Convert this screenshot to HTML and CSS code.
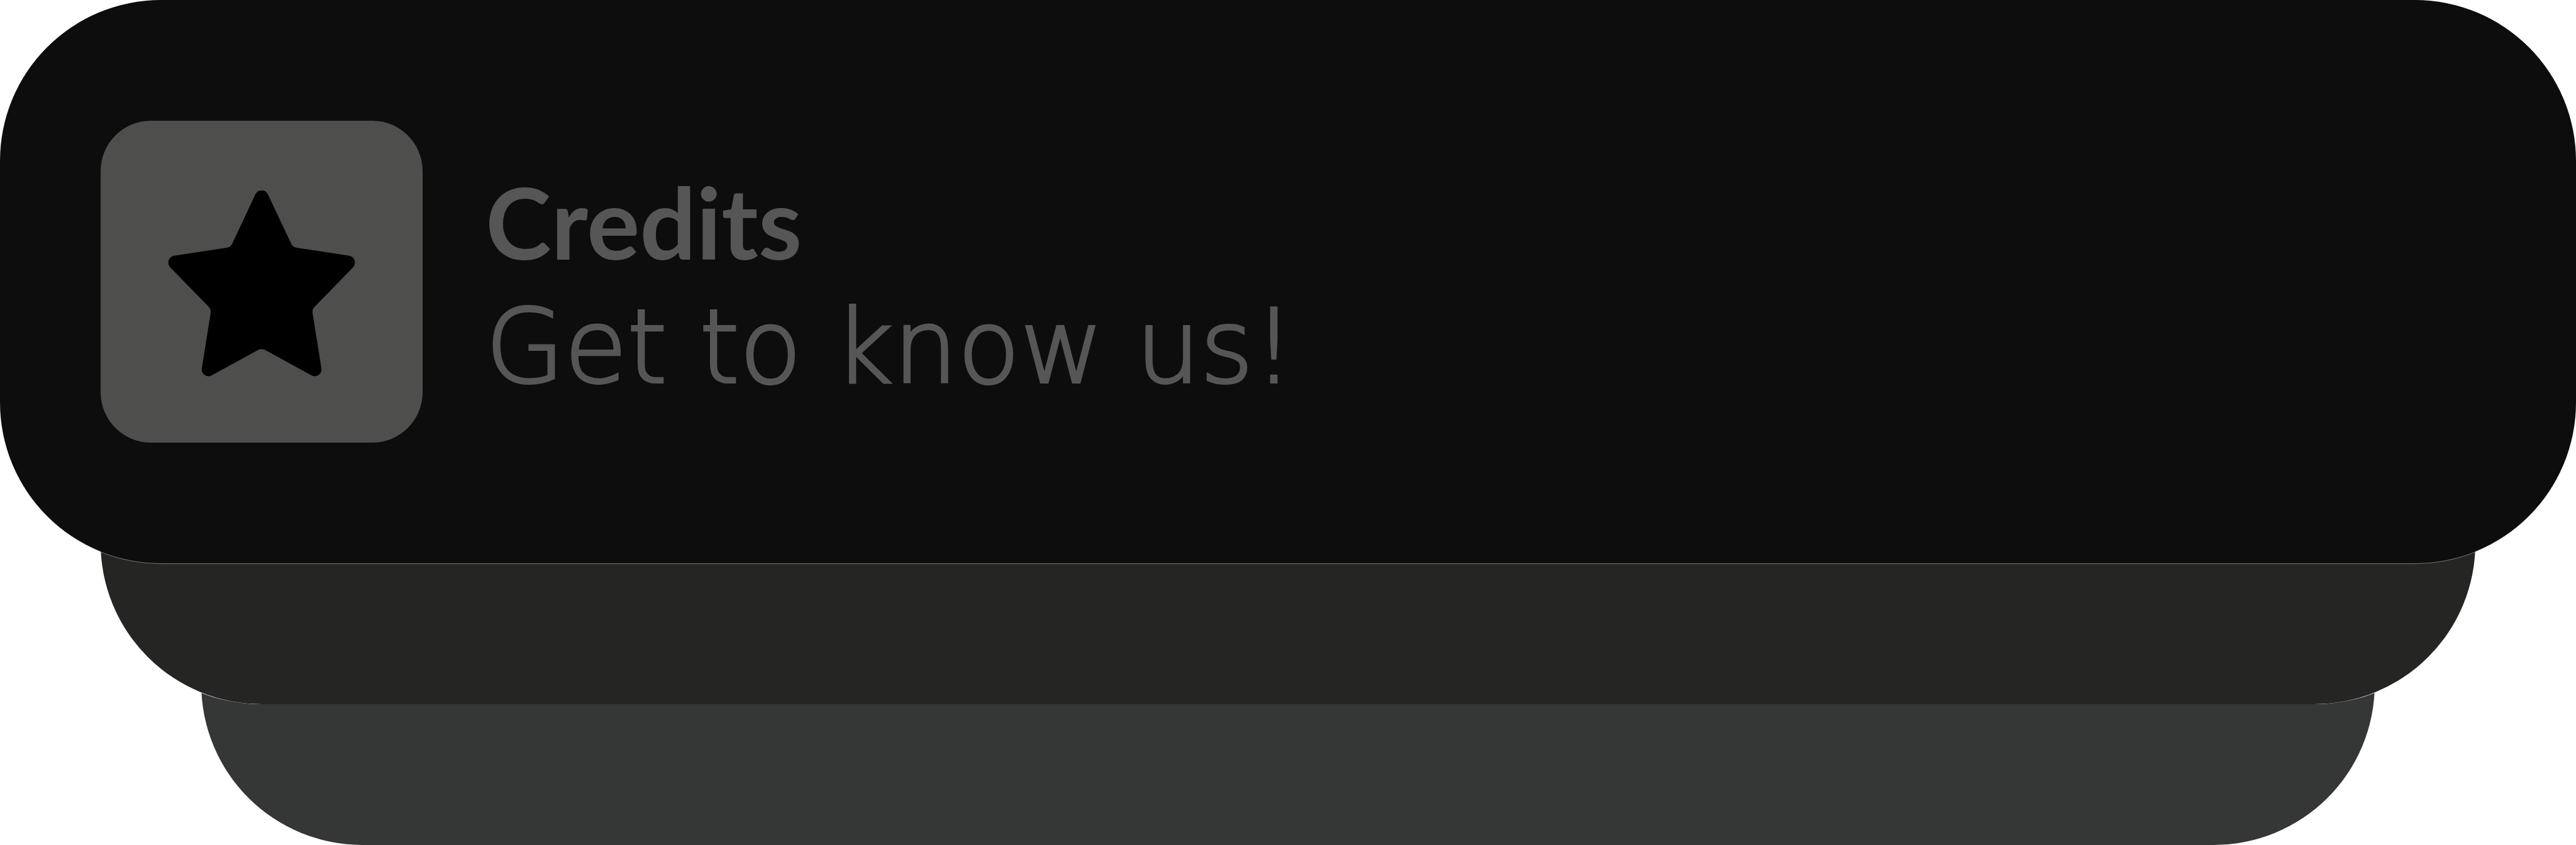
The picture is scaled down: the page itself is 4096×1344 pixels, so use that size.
FILE: index.html
```html
<!DOCTYPE html>
<html lang="en">
<head>
<meta charset="utf-8">
<title>Credits</title>
<link rel="stylesheet" href="styles.css">
</head>
<body>
<main class="stack">
  <a class="card" href="#credits">
    <span class="tile">
      <svg class="star" viewBox="0 0 1448 1448" aria-hidden="true">
        <path d="M696 331A31 31 0 0 1 752 331L858 555Q866 569 881 571L1118 607A32 32 0 0 1 1135 660L961 838Q951 849 953 864L993 1114A31 31 0 0 1 947 1145L739 1031Q724 1023 709 1031L501 1145A31 31 0 0 1 455 1114L495 864Q497 849 487 838L313 660A32 32 0 0 1 330 607L567 571Q583 569 591 555Z"/>
      </svg>
    </span>
    <span class="text">
      <strong class="title">Credits</strong>
      <span class="subtitle">Get to know us!</span>
    </span>
  </a>
  <div class="layer layer-middle"></div>
  <div class="layer layer-back"></div>
</main>
</body>
</html>
```
FILE: styles.css
```css
body {
  margin: 0;
  background: #fff;
}

.stack {
  display: flex;
  flex-direction: column;
  isolation: isolate;
}

.card {
  position: relative;
  z-index: 3;
  display: flex;
  align-items: center;
  gap: 100px;
  padding: 192px 160px;
  border-radius: 256px;
  background: #0d0d0d;
  box-shadow: 0 1px 0 rgba(255, 255, 255, 0.38);
  color: #565656;
  text-decoration: none;
}

.tile {
  flex: none;
  width: 512px;
  height: 512px;
  border-radius: 80px;
  background: #4e4e4c;
}

.star {
  display: block;
  width: 100%;
  height: 100%;
  fill: #000;
}

.text {
  display: flex;
  flex-direction: column;
  padding-top: 8px;
  line-height: 200px;
  white-space: nowrap;
}

.title {
  font-family: Lato, sans-serif;
  font-size: 158px;
  font-weight: 700;
}

.subtitle {
  font-family: "DejaVu Sans", sans-serif;
  font-size: 162px;
  font-weight: 200;
  -webkit-text-stroke: 4px #565656;
}

/* Each layer tucks 256px under the one above and shows 224px of itself. */
.layer {
  position: relative;
  height: 480px;
  margin-top: -256px;
  border-radius: 0 0 256px 256px;
}

.layer-middle {
  z-index: 2;
  margin-inline: 160px;
  background: #252523;
  box-shadow: 0 -12px 0 12px #fff;
}

.layer-back {
  z-index: 1;
  margin-inline: 320px;
  background: #353736;
}
```
